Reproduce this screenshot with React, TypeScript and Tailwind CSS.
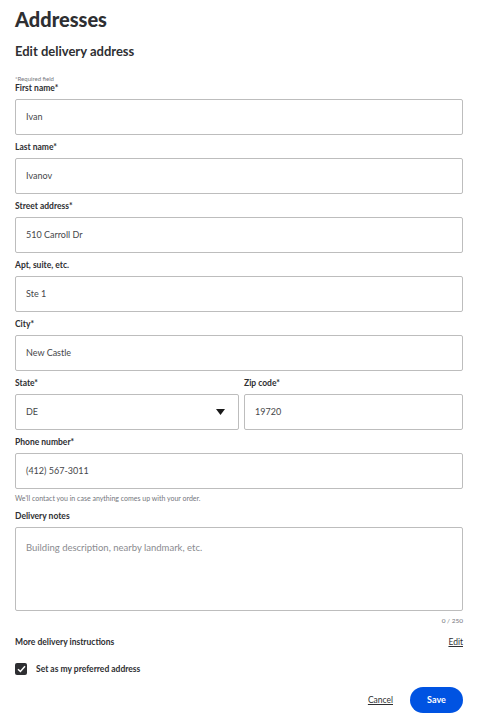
import React from "react";

const font = { fontFamily: "Lato, 'Open Sans', sans-serif" };

function Label({ children }: { children: React.ReactNode }) {
  return (
    <div className="mb-[6px] text-[8.5px] leading-[10px] font-bold text-[#2e2f32]">
      {children}
    </div>
  );
}

function Input({ value, children }: { value: string; children?: React.ReactNode }) {
  return (
    <div className="flex h-[36px] items-center justify-between rounded-[2px] border border-[#bdbdbd] bg-white px-[10px] text-[9px] text-[#46474a]">
      <span>{value}</span>
      {children}
    </div>
  );
}

function Field({ label, value }: { label: string; value: string }) {
  return (
    <div className="mt-[7px]">
      <Label>{label}</Label>
      <Input value={value} />
    </div>
  );
}

export default function App() {
  return (
    <div className="min-h-[717px] bg-white pl-[15px] pr-[17px] pt-[7px]" style={font}>
      <h1 className="text-[20px] leading-[24px] font-black text-[#2e2f32]">Addresses</h1>
      <h2 className="mt-[12px] text-[13px] leading-[16px] font-bold text-[#2e2f32]">
        Edit delivery address
      </h2>
      <div className="mt-[16px] text-[6px] leading-[8px] text-[#74767c]">*Required field</div>

      <div>
        <Label>First name*</Label>
        <Input value="Ivan" />
      </div>
      <Field label="Last name*" value="Ivanov" />
      <Field label="Street address*" value="510 Carroll Dr" />
      <Field label="Apt, suite, etc." value="Ste 1" />
      <Field label="City*" value="New Castle" />

      <div className="mt-[7px] flex gap-[5px]">
        <div className="w-[224px]">
          <Label>State*</Label>
          <Input value="DE">
            <svg width="9" height="6" viewBox="0 0 9 6" className="mr-[3px]">
              <path d="M0 0H9L4.5 6Z" fill="#1a1a1a" />
            </svg>
          </Input>
        </div>
        <div className="flex-1">
          <Label>Zip code*</Label>
          <Input value="19720" />
        </div>
      </div>

      <Field label="Phone number*" value="(412) 567-3011" />
      <div className="mt-[5px] text-[7px] leading-[8px] text-[#74767c]">
        We'll contact you in case anything comes up with your order.
      </div>

      <div className="mt-[9px]">
        <Label>Delivery notes</Label>
        <div className="h-[84px] rounded-[2px] border border-[#bdbdbd] px-[10px] pt-[14px] text-[9.5px] leading-[12px] text-[#8a8b8f]">
          Building description, nearby landmark, etc.
        </div>
      </div>
      <div className="mt-[6px] text-right text-[6.5px] leading-[8px] text-[#74767c]">0 / 250</div>

      <div className="mt-[12px] flex items-center justify-between text-[8.5px] leading-[10px] text-[#2e2f32]">
        <span className="font-bold">More delivery instructions</span>
        <span className="underline">Edit</span>
      </div>

      <div className="mt-[16px] flex items-center gap-[9px]">
        <div className="flex h-[12px] w-[12px] items-center justify-center rounded-[2px] bg-[#2e2f32]">
          <svg width="9" height="8" viewBox="0 0 9 8">
            <path d="M1 4.2L3.4 6.5L8 1.2" stroke="white" strokeWidth="1.5" fill="none" />
          </svg>
        </div>
        <span className="text-[8.5px] leading-[10px] font-bold text-[#2e2f32]">
          Set as my preferred address
        </span>
      </div>

      <div className="mt-[12px] flex items-center justify-end gap-[17px]">
        <span className="text-[8.5px] text-[#2e2f32] underline">Cancel</span>
        <button className="h-[26px] w-[53px] rounded-full bg-[#0053e2] text-[9px] font-bold text-white">
          Save
        </button>
      </div>
    </div>
  );
}
